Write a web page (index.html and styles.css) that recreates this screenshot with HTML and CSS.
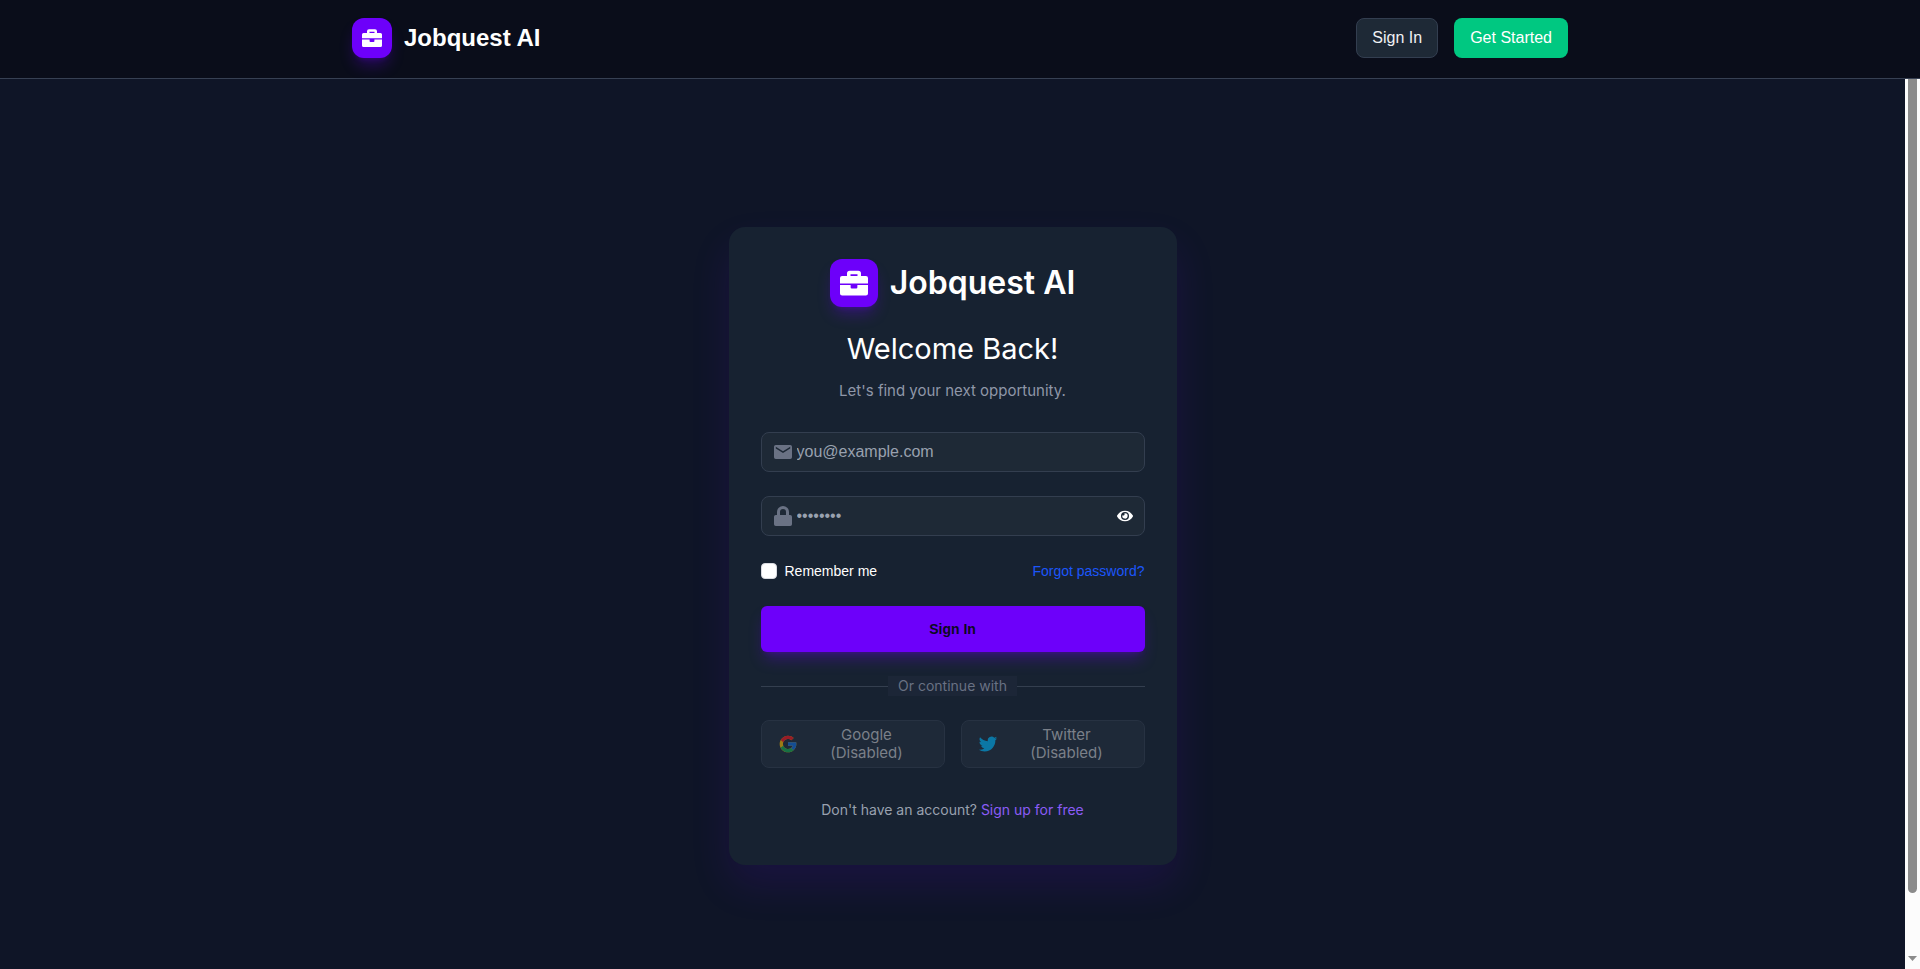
FILE: index.html
```html
<!DOCTYPE html>
<html lang="en">
<head>
<meta charset="utf-8">
<meta name="viewport" content="width=device-width, initial-scale=1">
<title>Jobquest AI - Sign In</title>
<link rel="stylesheet" href="styles.css">
</head>
<body>
<svg class="defs" aria-hidden="true">
  <symbol id="briefcase" viewBox="0 0 20 20">
    <path fill-rule="evenodd" d="M5 5V3.300A2 2 0 0 1 7 1.300h6A2 2 0 0 1 15 3.300V5h3.500A1.500 1.500 0 0 1 20 6.500v3.800H0V6.500A1.500 1.500 0 0 1 1.500 5zm2.500 0h5V3.800h-5zM0 11.500h7.600v1.700a.8.8 0 0 0 .8.8h3.200a.8.8 0 0 0 .8-.8v-1.700H20v6a1.500 1.500 0 0 1-1.500 1.500h-17A1.500 1.500 0 0 1 0 17.500z"/>
  </symbol>
</svg>
<header class="topbar">
  <div class="topbar-inner">
    <a class="brand" href="#">
      <span class="brand-mark"><svg class="brand-icon" aria-hidden="true"><use href="#briefcase"/></svg></span>
      <span class="brand-name">Jobquest AI</span>
    </a>
    <nav class="actions">
      <a class="btn btn-outline" href="#">Sign In</a>
      <a class="btn btn-accent" href="#">Get Started</a>
    </nav>
  </div>
</header>
<div class="viewport">
  <main class="page">
    <section class="card">
      <div class="card-brand">
        <span class="brand-mark brand-mark-lg"><svg class="brand-icon" aria-hidden="true"><use href="#briefcase"/></svg></span>
        <span class="card-brand-name">Jobquest AI</span>
      </div>
      <h1 class="title">Welcome Back!</h1>
      <p class="subtitle">Let's find your next opportunity.</p>
      <form class="form">
        <div class="field">
          <svg class="field-icon" viewBox="0 0 18 20" aria-hidden="true"><path fill-rule="evenodd" d="M1.800 3h14.400A1.800 1.800 0 0 1 18 4.800v10.400a1.800 1.800 0 0 1-1.800 1.800H1.800A1.800 1.800 0 0 1 0 15.200V4.800A1.800 1.800 0 0 1 1.800 3zm0 1.800v1.700L9 11l7.200-4.500V4.800L9 9.300z"/></svg>
          <input class="field-input" type="email" placeholder="you@example.com" aria-label="Email">
        </div>
        <div class="field">
          <svg class="field-icon" viewBox="0 0 18 20" aria-hidden="true"><path fill-rule="evenodd" d="M3 9V6a6 6 0 0 1 12 0v3h1.200A1.800 1.800 0 0 1 18 10.800v7.400a1.800 1.800 0 0 1-1.800 1.800H1.800A1.800 1.800 0 0 1 0 18.200v-7.400A1.800 1.800 0 0 1 1.800 9zm3 0h6V6a3 3 0 0 0-6 0z"/></svg>
          <input class="field-input" type="password" placeholder="••••••••" aria-label="Password">
          <button class="reveal" type="button" aria-label="Show password">
            <svg class="reveal-icon" viewBox="0 0 576 512" aria-hidden="true"><path d="M572.520 241.400C518.290 135.590 410.930 64 288 64S57.680 135.640 3.480 241.410a32.350 32.350 0 0 0 0 29.190C57.710 376.410 165.070 448 288 448s230.320-71.640 284.520-177.410a32.350 32.350 0 0 0 0-29.190zM288 400a144 144 0 1 1 144-144 143.930 143.930 0 0 1-144 144zm0-240a95.310 95.310 0 0 0-25.310 3.790 47.850 47.850 0 0 1-66.900 66.900A95.780 95.780 0 1 0 288 160z"/></svg>
          </button>
        </div>
        <div class="options">
          <label class="remember"><input class="check" type="checkbox">Remember me</label>
          <a class="forgot" href="#">Forgot password?</a>
        </div>
        <button class="submit" type="submit">Sign In</button>
      </form>
      <div class="divider"><span class="divider-label">Or continue with</span></div>
      <div class="socials">
        <button class="social" type="button" disabled>
          <svg class="social-icon" viewBox="0 0 48 48" aria-hidden="true">
            <path fill="#f0b400" d="M43.611 20.083H42V20H24v8h11.303c-1.649 4.657-6.080 8-11.303 8-6.627 0-12-5.373-12-12s5.373-12 12-12c3.059 0 5.842 1.154 7.961 3.039l5.657-5.657C34.046 6.053 29.268 4 24 4 12.955 4 4 12.955 4 24s8.955 20 20 20 20-8.955 20-20c0-1.341-.138-2.650-.389-3.917z"/>
            <path fill="#e8141c" d="M6.306 14.691l6.571 4.819C14.655 15.108 18.961 12 24 12c3.059 0 5.842 1.154 7.961 3.039l5.657-5.657C34.046 6.053 29.268 4 24 4 16.318 4 9.656 8.337 6.306 14.691z"/>
            <path fill="#14a04c" d="M24 44c5.166 0 9.860-1.977 13.409-5.192l-6.190-5.238A11.910 11.910 0 0 1 24 36c-5.202 0-9.619-3.317-11.283-7.946l-6.522 5.025C9.505 39.556 16.227 44 24 44z"/>
            <path fill="#0f66d0" d="M43.611 20.083H42V20H24v8h11.303a12.040 12.040 0 0 1-4.087 5.571l6.193 5.238C36.971 39.205 44 34 44 24c0-1.341-.138-2.650-.389-3.917z"/>
          </svg>
          <span class="social-label">Google (Disabled)</span>
        </button>
        <button class="social" type="button" disabled>
          <svg class="social-icon" viewBox="-1 -1 26 26" aria-hidden="true"><path fill="#00acee" d="M23.950 4.570a10 10 0 0 1-2.820.77 4.960 4.960 0 0 0 2.160-2.720c-.95.55-2 .95-3.130 1.190a4.920 4.920 0 0 0-8.380 4.480C7.690 8.100 4.070 6.130 1.640 3.160a4.820 4.820 0 0 0-.67 2.480c0 1.710.87 3.210 2.190 4.100a4.900 4.900 0 0 1-2.230-.62v.06a4.920 4.920 0 0 0 3.950 4.830 5 5 0 0 1-2.210.08 4.940 4.940 0 0 0 4.600 3.420A9.870 9.870 0 0 1 0 19.540a14 14 0 0 0 7.550 2.210c9.050 0 14-7.500 14-13.980 0-.21 0-.42-.02-.63a9.940 9.940 0 0 0 2.460-2.550z"/></svg>
          <span class="social-label">Twitter (Disabled)</span>
        </button>
      </div>
      <p class="signup">Don't have an account? <a class="signup-link" href="#">Sign up for free</a></p>
    </section>
  </main>
  <div class="scrollbar" aria-hidden="true">
    <span class="scrollbar-thumb"></span>
    <svg class="scrollbar-arrow" viewBox="0 0 9 5"><path d="M0 0h9L4.500 5z"/></svg>
  </div>
</div>
</body>
</html>
```
FILE: styles.css
```css
* {
  box-sizing: border-box;
}

body {
  margin: 0;
  height: 100vh;
  display: flex;
  flex-direction: column;
  background: #0f1527;
  color: #ffffff;
  font-family: "Liberation Sans", Arial, sans-serif;
  font-size: 16px;
  line-height: 24px;
}

a {
  color: inherit;
  text-decoration: none;
}

button,
input {
  font: inherit;
  color: inherit;
}

.defs {
  display: none;
}

.topbar {
  background: #0a0d1a;
  border-bottom: 1px solid #374053;
  padding: 18px 32px 20px;
}

.topbar-inner {
  width: 100%;
  max-width: 1216px;
  margin: 0 auto;
  display: flex;
  justify-content: space-between;
  align-items: center;
}

.brand,
.card-brand {
  display: flex;
  align-items: center;
  gap: 12px;
}

.brand-mark {
  width: 40px;
  height: 40px;
  display: grid;
  place-items: center;
  border-radius: 12px;
  background: #6d00fa;
  box-shadow: 0 10px 15px -3px rgba(109, 0, 250, 0.3), 0 4px 6px -4px rgba(109, 0, 250, 0.3);
}

.brand-icon {
  width: 20px;
  height: 20px;
  fill: #ffffff;
}

.brand-mark-lg {
  width: 48px;
  height: 48px;
}

.brand-mark-lg .brand-icon {
  width: 28px;
  height: 28px;
}

.brand-name {
  font-size: 24px;
  line-height: 32px;
  font-weight: 700;
}

.actions {
  display: flex;
  gap: 16px;
}

.btn {
  height: 40px;
  padding: 0 16px;
  display: flex;
  align-items: center;
  border-radius: 8px;
}

.btn-outline {
  padding: 0 15px;
  background: #1e2936;
  border: 1px solid #333e50;
  color: #f0f1f4;
}

.btn-accent {
  background: #00c881;
}

.viewport {
  flex: 1;
  min-height: 0;
  display: flex;
}

.page {
  flex: 1;
  display: flex;
  justify-content: center;
  align-items: center;
  padding: 147px 16px 103px;
}

.card {
  width: 100%;
  max-width: 448px;
  padding: 32px 32px 45px;
  border-radius: 16px;
  background: #172231;
  box-shadow: 0 20px 40px rgba(109, 0, 250, 0.12);
  font-family: Inter, "Liberation Sans", sans-serif;
}

.card-brand {
  justify-content: center;
}

.card-brand-name {
  font-size: 32px;
  line-height: 36px;
  font-weight: 600;
}

.title {
  margin: 24px 0 0;
  font-size: 29px;
  line-height: 36px;
  font-weight: 400;
  text-align: center;
}

.subtitle {
  margin: 12px 0 0;
  color: #8f97a8;
  font-size: 15px;
  text-align: center;
}

.form {
  margin-top: 29px;
  display: flex;
  flex-direction: column;
  font-family: "Liberation Sans", Arial, sans-serif;
}

.field {
  height: 40px;
  margin-bottom: 24px;
  padding: 0 11px 0 12px;
  display: flex;
  align-items: center;
  gap: 5px;
  border: 1px solid #333e4f;
  border-radius: 8px;
  background: #1e2936;
}

.field-icon {
  width: 18px;
  height: 20px;
  flex: none;
  fill: #6a7284;
}

.field-input {
  flex: 1;
  min-width: 0;
  padding: 0;
  border: 0;
  outline: 0;
  background: none;
}

.field-input::placeholder {
  color: #99a1af;
  opacity: 1;
}

.reveal {
  padding: 0;
  border: 0;
  background: none;
  display: flex;
}

.reveal-icon {
  width: 16px;
  height: 16px;
  fill: #ffffff;
}

.options {
  margin-top: 1px;
  display: flex;
  justify-content: space-between;
  align-items: center;
  font-size: 14px;
  line-height: 20px;
}

.remember {
  display: flex;
  align-items: center;
  gap: 8px;
}

.check {
  appearance: none;
  width: 16px;
  height: 16px;
  margin: 0;
  border: 1px solid #d8dae0;
  border-radius: 4px;
  background: #ffffff;
}

.forgot {
  color: #1c56fa;
}

.submit {
  height: 46px;
  margin-top: 25px;
  border: 0;
  border-radius: 6px;
  background: #6d00fa;
  box-shadow: 0 10px 15px -3px rgba(109, 0, 250, 0.3), 0 4px 6px -4px rgba(109, 0, 250, 0.3);
  color: #0c0a20;
  font-size: 14px;
  font-weight: 700;
}

.divider {
  margin: 24px 0;
  display: flex;
  align-items: center;
  color: #697183;
  font-size: 14px;
  line-height: 20px;
}

.divider::before,
.divider::after {
  content: "";
  flex: 1;
  height: 1px;
  background: #343f4f;
}

.divider-label {
  padding: 0 10px;
  background: #1c2637;
}

.socials {
  display: grid;
  grid-template-columns: 1fr 1fr;
  gap: 16px;
}

.social {
  height: 48px;
  padding: 0 16px;
  display: flex;
  align-items: center;
  border: 1px solid #273242;
  border-radius: 8px;
  background: #1e2938;
  color: #7b8089;
  font-size: 15px;
  line-height: 18px;
}

.social-icon {
  width: 20px;
  height: 20px;
  flex: none;
  opacity: 0.6;
}

.social-label {
  flex: 1;
  padding: 0 8px 0 16px;
  text-align: center;
}

.signup {
  margin: 32px 0 0;
  color: #99a1af;
  font-size: 14px;
  line-height: 20px;
  text-align: center;
}

.signup-link {
  color: #8b5cf6;
}

.scrollbar {
  width: 15px;
  padding-bottom: 8px;
  display: flex;
  flex-direction: column;
  justify-content: space-between;
  align-items: center;
  background: #fcfcfc;
}

.scrollbar-thumb {
  width: 9px;
  height: calc(100% - 68px);
  border-radius: 0 0 5px 5px;
  background: #8b8b8b;
}

.scrollbar-arrow {
  width: 9px;
  height: 5px;
  fill: #8b8b8b;
}
```
